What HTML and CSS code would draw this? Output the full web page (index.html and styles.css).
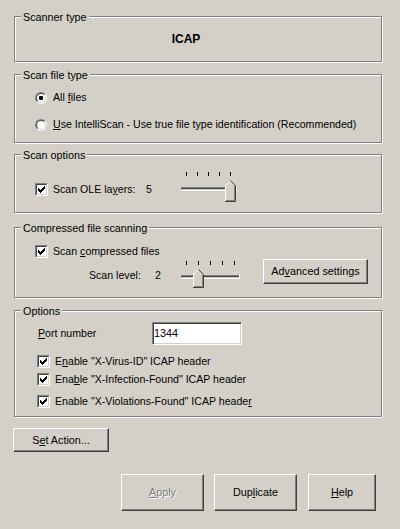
FILE: index.html
```html
<!DOCTYPE html>
<html>
<head>
<meta charset="utf-8">
<link rel="stylesheet" href="styles.css">
</head>
<body>
<div class="dialog">
  <section class="group g-scanner">
    <div class="legend">Scanner type</div>
    <div class="icap">ICAP</div>
  </section>

  <section class="group g-filetype">
    <div class="legend">Scan file type</div>
    <div class="row r-all">
      <span class="radio"><span class="radio-in"><span class="dot"></span></span></span>
      <span class="rtext">All <u>f</u>iles</span>
    </div>
    <div class="row r-intelli">
      <span class="radio"><span class="radio-in"></span></span>
      <span class="rtext"><u>U</u>se IntelliScan - Use true file type identification (Recommended)</span>
    </div>
  </section>

  <section class="group g-options">
    <div class="legend">Scan options</div>
    <div class="row r-ole">
      <span class="check"><span class="check-in"><svg width="7" height="7" viewBox="0 0 7 7"><path d="M0 2h1v3H0zM1 3h1v3H1zM2 4h1v3H2zM3 3h1v3H3zM4 2h1v3H4zM5 1h1v3H5zM6 0h1v3H6z" fill="#000"/></svg></span></span>
      <span class="ctext w-ole">Scan OLE la<u>y</u>ers:</span>
      <span class="val">5</span>
      <svg class="slider s-ole" width="58" height="31" viewBox="0 0 58 31">
        <g fill="#000">
          <rect x="6" y="0" width="1" height="4"/>
          <rect x="17" y="0" width="1" height="4"/>
          <rect x="28" y="0" width="1" height="4"/>
          <rect x="39" y="0" width="1" height="4"/>
          <rect x="50" y="0" width="1" height="4"/>
        </g>
        <rect x="1" y="15" width="56" height="1" fill="#808080"/>
        <rect x="1" y="16" width="1" height="2" fill="#808080"/>
        <rect x="2" y="16" width="54" height="1" fill="#404040"/>
        <rect x="1" y="18" width="56" height="1" fill="#fff"/>
        <rect x="56" y="15" width="1" height="4" fill="#fff"/>
        <polygon points="45,13.5 50.5,8 56,13.5 56,30 45,30" fill="#d4d0c8"/>
        <polyline points="45.5,29 45.5,13.5 50.5,8.5" stroke="#fff" fill="none"/>
        <polyline points="50.5,8.5 55.5,13.5 55.5,29.5 45,29.5" stroke="#404040" fill="none"/>
        <polyline points="54.5,14 54.5,28.5 46,28.5" stroke="#808080" fill="none"/>
      </svg>
    </div>
  </section>

  <section class="group g-compressed">
    <div class="legend">Compressed file scanning</div>
    <div class="row r-comp">
      <span class="check"><span class="check-in"><svg width="7" height="7" viewBox="0 0 7 7"><path d="M0 2h1v3H0zM1 3h1v3H1zM2 4h1v3H2zM3 3h1v3H3zM4 2h1v3H4zM5 1h1v3H5zM6 0h1v3H6z" fill="#000"/></svg></span></span>
      <span class="ctext">Scan <u>c</u>ompressed files</span>
    </div>
    <div class="row r-level">
      <span class="lvl-label">Scan level:</span>
      <span class="lvl-val">2</span>
      <svg class="slider s-level" width="60" height="28" viewBox="0 0 60 28">
        <g fill="#000">
          <rect x="6" y="0" width="1" height="4"/>
          <rect x="18" y="0" width="1" height="4"/>
          <rect x="30" y="0" width="1" height="4"/>
          <rect x="42" y="0" width="1" height="4"/>
          <rect x="54" y="0" width="1" height="4"/>
        </g>
        <rect x="1" y="14" width="59" height="1" fill="#808080"/>
        <rect x="1" y="15" width="1" height="2" fill="#808080"/>
        <rect x="2" y="15" width="57" height="1" fill="#404040"/>
        <rect x="1" y="17" width="59" height="1" fill="#fff"/>
        <rect x="59" y="14" width="1" height="4" fill="#fff"/>
        <polygon points="13,13.5 18.5,8 24,13.5 24,27 13,27" fill="#d4d0c8"/>
        <polyline points="13.5,26 13.5,13.5 18.5,8.5" stroke="#fff" fill="none"/>
        <polyline points="18.5,8.5 23.5,13.5 23.5,26.5 13,26.5" stroke="#404040" fill="none"/>
        <polyline points="22.5,14 22.5,25.5 14,25.5" stroke="#808080" fill="none"/>
      </svg>
      <button class="btn b-adv">Ad<u>v</u>anced settings</button>
    </div>
  </section>

  <section class="group g-opts">
    <div class="legend">Options</div>
    <div class="row r-port">
      <span class="port-label"><u>P</u>ort number</span>
      <input class="port" type="text" value="1344">
    </div>
    <div class="row r-h1">
      <span class="check"><span class="check-in"><svg width="7" height="7" viewBox="0 0 7 7"><path d="M0 2h1v3H0zM1 3h1v3H1zM2 4h1v3H2zM3 3h1v3H3zM4 2h1v3H4zM5 1h1v3H5zM6 0h1v3H6z" fill="#000"/></svg></span></span>
      <span class="ctext">E<u>n</u>able "X-Virus-ID" ICAP header</span>
    </div>
    <div class="row r-h2">
      <span class="check"><span class="check-in"><svg width="7" height="7" viewBox="0 0 7 7"><path d="M0 2h1v3H0zM1 3h1v3H1zM2 4h1v3H2zM3 3h1v3H3zM4 2h1v3H4zM5 1h1v3H5zM6 0h1v3H6z" fill="#000"/></svg></span></span>
      <span class="ctext">Ena<u>b</u>le "X-Infection-Found" ICAP header</span>
    </div>
    <div class="row r-h3">
      <span class="check"><span class="check-in"><svg width="7" height="7" viewBox="0 0 7 7"><path d="M0 2h1v3H0zM1 3h1v3H1zM2 4h1v3H2zM3 3h1v3H3zM4 2h1v3H4zM5 1h1v3H5zM6 0h1v3H6z" fill="#000"/></svg></span></span>
      <span class="ctext">Enable "X-Violations-Found" ICAP heade<u>r</u></span>
    </div>
  </section>

  <div class="action-row">
    <button class="btn b-set">S<u>e</u>t Action...</button>
  </div>

  <div class="bottom-row">
    <button class="btn b-apply disabled"><u>A</u>pply</button>
    <button class="btn b-dup">Dup<u>l</u>icate</button>
    <button class="btn b-help"><u>H</u>elp</button>
  </div>
</div>
</body>
</html>
```

FILE: styles.css
```css
html, body {
  margin: 0;
  padding: 0;
}
body {
  width: 400px;
  height: 529px;
  overflow: hidden;
  background: #d4d0c8;
  font-family: "Liberation Sans", Arial, sans-serif;
  font-size: 10.6px;
  line-height: 13px;
  color: #000;
}
u {
  text-decoration: underline;
  text-underline-offset: 1px;
}
.dialog {
  display: flex;
  flex-direction: column;
  padding: 16px 18px 0 14px;
}
.group {
  box-sizing: border-box;
  border: 1px solid #808080;
  box-shadow: 1px 1px 0 #fff, inset 1px 1px 0 #fff;
  display: flex;
  flex-direction: column;
  flex: none;
}
.legend {
  align-self: flex-start;
  margin: -6px 0 0 6px;
  padding: 0 2px;
  background: #d4d0c8;
  height: 13px;
  white-space: nowrap;
  font-size: 10.8px;
}
.g-scanner { height: 46px; margin-bottom: 12px; }
.g-filetype { height: 69px; margin-bottom: 11px; padding-left: 20px; }
.g-options { height: 59px; margin-bottom: 14px; padding-left: 20px; }
.g-compressed { height: 71px; margin-bottom: 12px; padding-left: 20px; }
.g-opts { height: 107px; padding-left: 22px; }
.g-filetype .legend,
.g-options .legend,
.g-compressed .legend { margin-left: -14px; }
.g-opts .legend { margin-left: -16px; }

.icap {
  margin-top: 8px;
  font-weight: bold;
  font-size: 12px;
  line-height: 14px;
  text-align: center;
  padding-right: 24px;
}

.row {
  display: flex;
  align-items: center;
  white-space: nowrap;
}
.r-all { margin-top: 9px; }
.r-intelli { margin-top: 14px; }

.radio {
  box-sizing: border-box;
  width: 12px;
  height: 12px;
  border-radius: 50%;
  border: 1px solid;
  border-color: #808080 #fff #fff #808080;
  flex: none;
}
.radio-in {
  box-sizing: border-box;
  display: flex;
  align-items: center;
  justify-content: center;
  width: 10px;
  height: 10px;
  border-radius: 50%;
  border: 1px solid;
  border-color: #404040 #d4d0c8 #d4d0c8 #404040;
  background: #fff;
}
.dot {
  width: 4px;
  height: 4px;
  border-radius: 1px;
  background: #000;
}
.rtext { margin-left: 6px; }

.check {
  box-sizing: border-box;
  width: 13px;
  height: 13px;
  border: 1px solid;
  border-color: #808080 #fff #fff #808080;
  flex: none;
}
.check-in {
  box-sizing: border-box;
  display: flex;
  align-items: center;
  justify-content: center;
  width: 11px;
  height: 11px;
  border: 1px solid;
  border-color: #404040 #d4d0c8 #d4d0c8 #404040;
  background: #fff;
}
.check-in svg { display: block; }
.ctext { margin-left: 5px; }

.r-ole {
  margin-top: 21px;
  align-items: flex-start;
}
.w-ole { width: 93px; flex: none; }
.val { width: 34px; flex: none; }
.slider { display: block; flex: none; }
.s-ole { margin-top: -11px; }

.r-comp { margin-top: 10px; }
.r-level {
  margin-top: 1px;
  align-items: flex-start;
  height: 25px;
}
.lvl-label { margin: 10px 0 0 54px; width: 66px; flex: none; }
.lvl-val { margin-top: 10px; width: 25px; flex: none; }
.s-level { margin-top: 2px; }

.btn {
  box-sizing: border-box;
  display: flex;
  align-items: center;
  justify-content: center;
  padding: 0;
  margin: 0;
  border: 1px solid;
  border-color: #fff #404040 #404040 #fff;
  box-shadow: inset -1px -1px 0 #808080;
  background: #d4d0c8;
  font-family: "Liberation Sans", Arial, sans-serif;
  font-size: 10.8px;
  line-height: 13px;
  color: #000;
  white-space: nowrap;
  flex: none;
}
.b-adv { width: 105px; height: 25px; margin-left: 23px; }

.r-port { margin-top: 4px; height: 23px; }
.port-label { margin-left: 1px; width: 114px; flex: none; }
.port {
  box-sizing: border-box;
  width: 90px;
  height: 23px;
  margin: 0;
  padding: 0 0 2px 1px;
  border: 1px solid;
  border-color: #808080 #fff #fff #808080;
  box-shadow: inset 1px 1px 0 #404040, inset -1px -1px 0 #d4d0c8;
  background: #fff;
  font-family: "Liberation Sans", Arial, sans-serif;
  font-size: 10.8px;
  color: #000;
  outline: none;
}
.r-h1 { margin-top: 10px; }
.r-h2 { margin-top: 5px; }
.r-h3 { margin-top: 9px; }

.action-row {
  display: flex;
  margin-top: 11px;
}
.b-set { width: 96px; height: 24px; margin-left: -1px; }

.bottom-row {
  display: flex;
  justify-content: flex-end;
  gap: 10px;
  margin-top: 22px;
  padding-right: 6px;
}
.bottom-row .btn { height: 37px; }
.b-apply { width: 83px; }
.b-dup { width: 83px; margin-right: 1px; }
.b-help { width: 68px; }
.disabled {
  color: #808080;
  text-shadow: 1px 1px 0 #fff;
}
```
